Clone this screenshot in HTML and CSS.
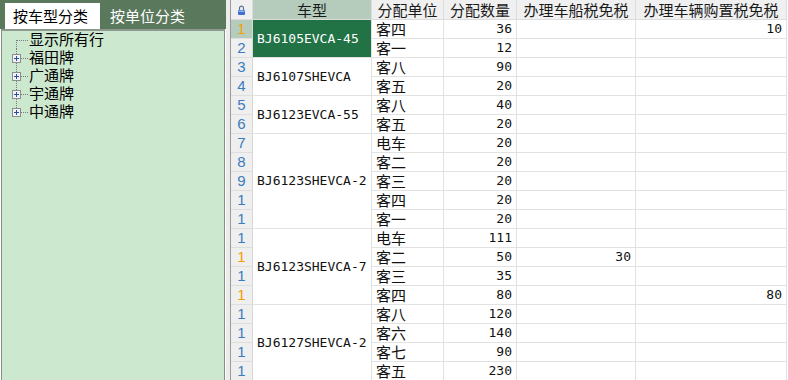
FILE: index.html
```html
<!DOCTYPE html>
<html>
<head>
<meta charset="utf-8">
<link rel="stylesheet" href="styles.css">
</head>
<body>
<div class="app">
  <div class="left">
    <div class="tabs">
      <div class="tab active">按车型分类</div>
      <div class="tab">按单位分类</div>
    </div>
    <div class="tree">
      <div class="node">
        <svg class="gut" width="27" height="18" viewBox="0 0 27 18"><line x1="15.5" y1="9" x2="15.5" y2="18" class="dot"/><line x1="16" y1="9.5" x2="27" y2="9.5" class="dot"/></svg>
        <span class="lbl">显示所有行</span>
      </div>
      <div class="node">
        <svg class="gut" width="27" height="18" viewBox="0 0 27 18"><line x1="15.5" y1="0" x2="15.5" y2="18" class="dot"/><line x1="20" y1="9.5" x2="27" y2="9.5" class="dot"/><rect x="11.5" y="5.5" width="8" height="8" class="box"/><line x1="13" y1="9.5" x2="18" y2="9.5" class="plus"/><line x1="15.5" y1="7" x2="15.5" y2="12" class="plus"/></svg>
        <span class="lbl">福田牌</span>
      </div>
      <div class="node">
        <svg class="gut" width="27" height="18" viewBox="0 0 27 18"><line x1="15.5" y1="0" x2="15.5" y2="18" class="dot"/><line x1="20" y1="9.5" x2="27" y2="9.5" class="dot"/><rect x="11.5" y="5.5" width="8" height="8" class="box"/><line x1="13" y1="9.5" x2="18" y2="9.5" class="plus"/><line x1="15.5" y1="7" x2="15.5" y2="12" class="plus"/></svg>
        <span class="lbl">广通牌</span>
      </div>
      <div class="node">
        <svg class="gut" width="27" height="18" viewBox="0 0 27 18"><line x1="15.5" y1="0" x2="15.5" y2="18" class="dot"/><line x1="20" y1="9.5" x2="27" y2="9.5" class="dot"/><rect x="11.5" y="5.5" width="8" height="8" class="box"/><line x1="13" y1="9.5" x2="18" y2="9.5" class="plus"/><line x1="15.5" y1="7" x2="15.5" y2="12" class="plus"/></svg>
        <span class="lbl">宇通牌</span>
      </div>
      <div class="node">
        <svg class="gut" width="27" height="18" viewBox="0 0 27 18"><line x1="15.5" y1="0" x2="15.5" y2="9" class="dot"/><line x1="20" y1="9.5" x2="27" y2="9.5" class="dot"/><rect x="11.5" y="5.5" width="8" height="8" class="box"/><line x1="13" y1="9.5" x2="18" y2="9.5" class="plus"/><line x1="15.5" y1="7" x2="15.5" y2="12" class="plus"/></svg>
        <span class="lbl">中通牌</span>
      </div>
    </div>
  </div>
  <div class="splitter"></div>
  <div class="gridwrap">
    <div class="grid">
      <div class="c hd corner"><svg width="9" height="10" viewBox="0 0 9 10"><path d="M2.5 5V3.2a2 2 0 0 1 4 0V5" fill="none" stroke="#5a6f9a" stroke-width="1.2"/><rect x="1" y="5" width="7" height="5" rx="0.8" fill="#3f6fd0"/><rect x="1.5" y="5.5" width="6" height="1.5" fill="#8fb0ee"/></svg></div>
      <div class="c hd sel">车型</div>
      <div class="c hd">分配单位</div>
      <div class="c hd">分配数量</div>
      <div class="c hd">办理车船税免税</div>
      <div class="c hd">办理车辆购置税免税</div>

      <div class="c rh selrh or">1</div><div class="c model cur s2">BJ6105EVCA-45</div><div class="c u">客四</div><div class="c n">36</div><div class="c n"></div><div class="c n">10</div>
      <div class="c rh">2</div><div class="c u">客一</div><div class="c n">12</div><div class="c n"></div><div class="c n"></div>
      <div class="c rh">3</div><div class="c model s2">BJ6107SHEVCA</div><div class="c u">客八</div><div class="c n">90</div><div class="c n"></div><div class="c n"></div>
      <div class="c rh">4</div><div class="c u">客五</div><div class="c n">20</div><div class="c n"></div><div class="c n"></div>
      <div class="c rh">5</div><div class="c model s2">BJ6123EVCA-55</div><div class="c u">客八</div><div class="c n">40</div><div class="c n"></div><div class="c n"></div>
      <div class="c rh">6</div><div class="c u">客五</div><div class="c n">20</div><div class="c n"></div><div class="c n"></div>
      <div class="c rh">7</div><div class="c model s5">BJ6123SHEVCA-2</div><div class="c u">电车</div><div class="c n">20</div><div class="c n"></div><div class="c n"></div>
      <div class="c rh">8</div><div class="c u">客二</div><div class="c n">20</div><div class="c n"></div><div class="c n"></div>
      <div class="c rh">9</div><div class="c u">客三</div><div class="c n">20</div><div class="c n"></div><div class="c n"></div>
      <div class="c rh">1</div><div class="c u">客四</div><div class="c n">20</div><div class="c n"></div><div class="c n"></div>
      <div class="c rh">1</div><div class="c u">客一</div><div class="c n">20</div><div class="c n"></div><div class="c n"></div>
      <div class="c rh">1</div><div class="c model s4">BJ6123SHEVCA-7</div><div class="c u">电车</div><div class="c n">111</div><div class="c n"></div><div class="c n"></div>
      <div class="c rh or">1</div><div class="c u">客二</div><div class="c n">50</div><div class="c n">30</div><div class="c n"></div>
      <div class="c rh">1</div><div class="c u">客三</div><div class="c n">35</div><div class="c n"></div><div class="c n"></div>
      <div class="c rh or">1</div><div class="c u">客四</div><div class="c n">80</div><div class="c n"></div><div class="c n">80</div>
      <div class="c rh">1</div><div class="c model s4">BJ6127SHEVCA-2</div><div class="c u">客八</div><div class="c n">120</div><div class="c n"></div><div class="c n"></div>
      <div class="c rh">1</div><div class="c u">客六</div><div class="c n">140</div><div class="c n"></div><div class="c n"></div>
      <div class="c rh">1</div><div class="c u">客七</div><div class="c n">90</div><div class="c n"></div><div class="c n"></div>
      <div class="c rh">1</div><div class="c u">客五</div><div class="c n">230</div><div class="c n"></div><div class="c n"></div>
    </div>
  </div>
</div>
</body>
</html>
```
FILE: styles.css
```css
html, body {
  margin: 0;
  padding: 0;
  width: 788px;
  height: 380px;
  overflow: hidden;
  background: #ffffff;
}
.app {
  display: flex;
  height: 380px;
  font-family: "Noto Sans CJK SC", "Liberation Sans", sans-serif;
  font-size: 15px;
}
.left {
  width: 226px;
  display: flex;
  flex-direction: column;
  flex: none;
}
.tabs {
  height: 29px;
  background: #5a785c;
  display: flex;
  align-items: flex-end;
  padding-left: 5px;
  box-sizing: border-box;
}
.tab {
  height: 26px;
  line-height: 26px;
  padding: 0 8px 0 8px;
  color: #ffffff;
  white-space: nowrap;
  margin-right: 2px;
}
.tab.active {
  background: #ffffff;
  color: #000000;
  width: 95px;
  box-sizing: border-box;
}
.tree {
  flex: 1;
  margin: 0 1px;
  background: #cce8cf;
  border: 1px solid #858f86;
  border-bottom: none;
  border-top: 2px solid #8e988f;
}
.node {
  display: flex;
  align-items: center;
  height: 18px;
  color: #000000;
}
.lbl {
  display: block;
  height: 18px;
  line-height: 18px;
  white-space: nowrap;
  font-family: "Liberation Sans", "Noto Sans CJK SC", sans-serif;
}
.gut {
  display: block;
  flex: none;
  margin-left: -1px;
  margin-right: 1px;
}
.dot {
  stroke: #7a7a7a;
  stroke-width: 1;
  stroke-dasharray: 1 1;
  shape-rendering: crispEdges;
}
.box {
  fill: #f2f2f2;
  stroke: #8a8d92;
  stroke-width: 1;
}
.plus {
  stroke: #2a4ea6;
  stroke-width: 1;
  shape-rendering: crispEdges;
}
.splitter {
  width: 4px;
  flex: none;
  background: #ececec;
  border-right: 1px solid #9a9a9a;
}
.gridwrap {
  flex: 1;
  overflow: hidden;
  height: 380px;
}
.grid {
  display: grid;
  grid-template-columns: 22px 119px 72px 73px 119px 151px;
  grid-template-rows: 20px;
  grid-auto-rows: 19px;
}
.c {
  box-sizing: border-box;
  border-right: 1px solid #e2e2e2;
  border-bottom: 1px solid #e2e2e2;
  white-space: nowrap;
  line-height: 18px;
  color: #111111;
}
.hd {
  background: #f0f0f0;
  text-align: center;
  line-height: 19px;
  border-bottom: 1px solid #dcdcdc;
  border-right: 1px solid #dcdcdc;
  color: #1a1a1a;
}
.hd.sel {
  background: #b5ccbd;
}
.corner {
  display: flex;
  align-items: center;
  justify-content: center;
}
.rh {
  background: #efefef;
  text-align: center;
  color: #3a7cc0;
  font-family: "Liberation Sans", sans-serif;
  font-size: 15px;
  border-right: 1px solid #d8d8d8;
  border-bottom: 1px solid #dedede;
}
.rh.or {
  color: #f5a000;
}
.rh.selrh {
  background: #b5ccbd;
}
.u {
  padding-left: 4px;
}
.n {
  text-align: right;
  padding-right: 4px;
  font-family: "DejaVu Sans Mono", monospace;
  font-size: 13px;
}
.model {
  display: flex;
  align-items: center;
  padding-left: 4px;
  font-family: "DejaVu Sans Mono", monospace;
  font-size: 13px;
  background: #ffffff;
}
.model.cur {
  background: #217346;
  color: #ffffff;
}
.s2 { grid-row: span 2; }
.s4 { grid-row: span 4; }
.s5 { grid-row: span 5; }
```
